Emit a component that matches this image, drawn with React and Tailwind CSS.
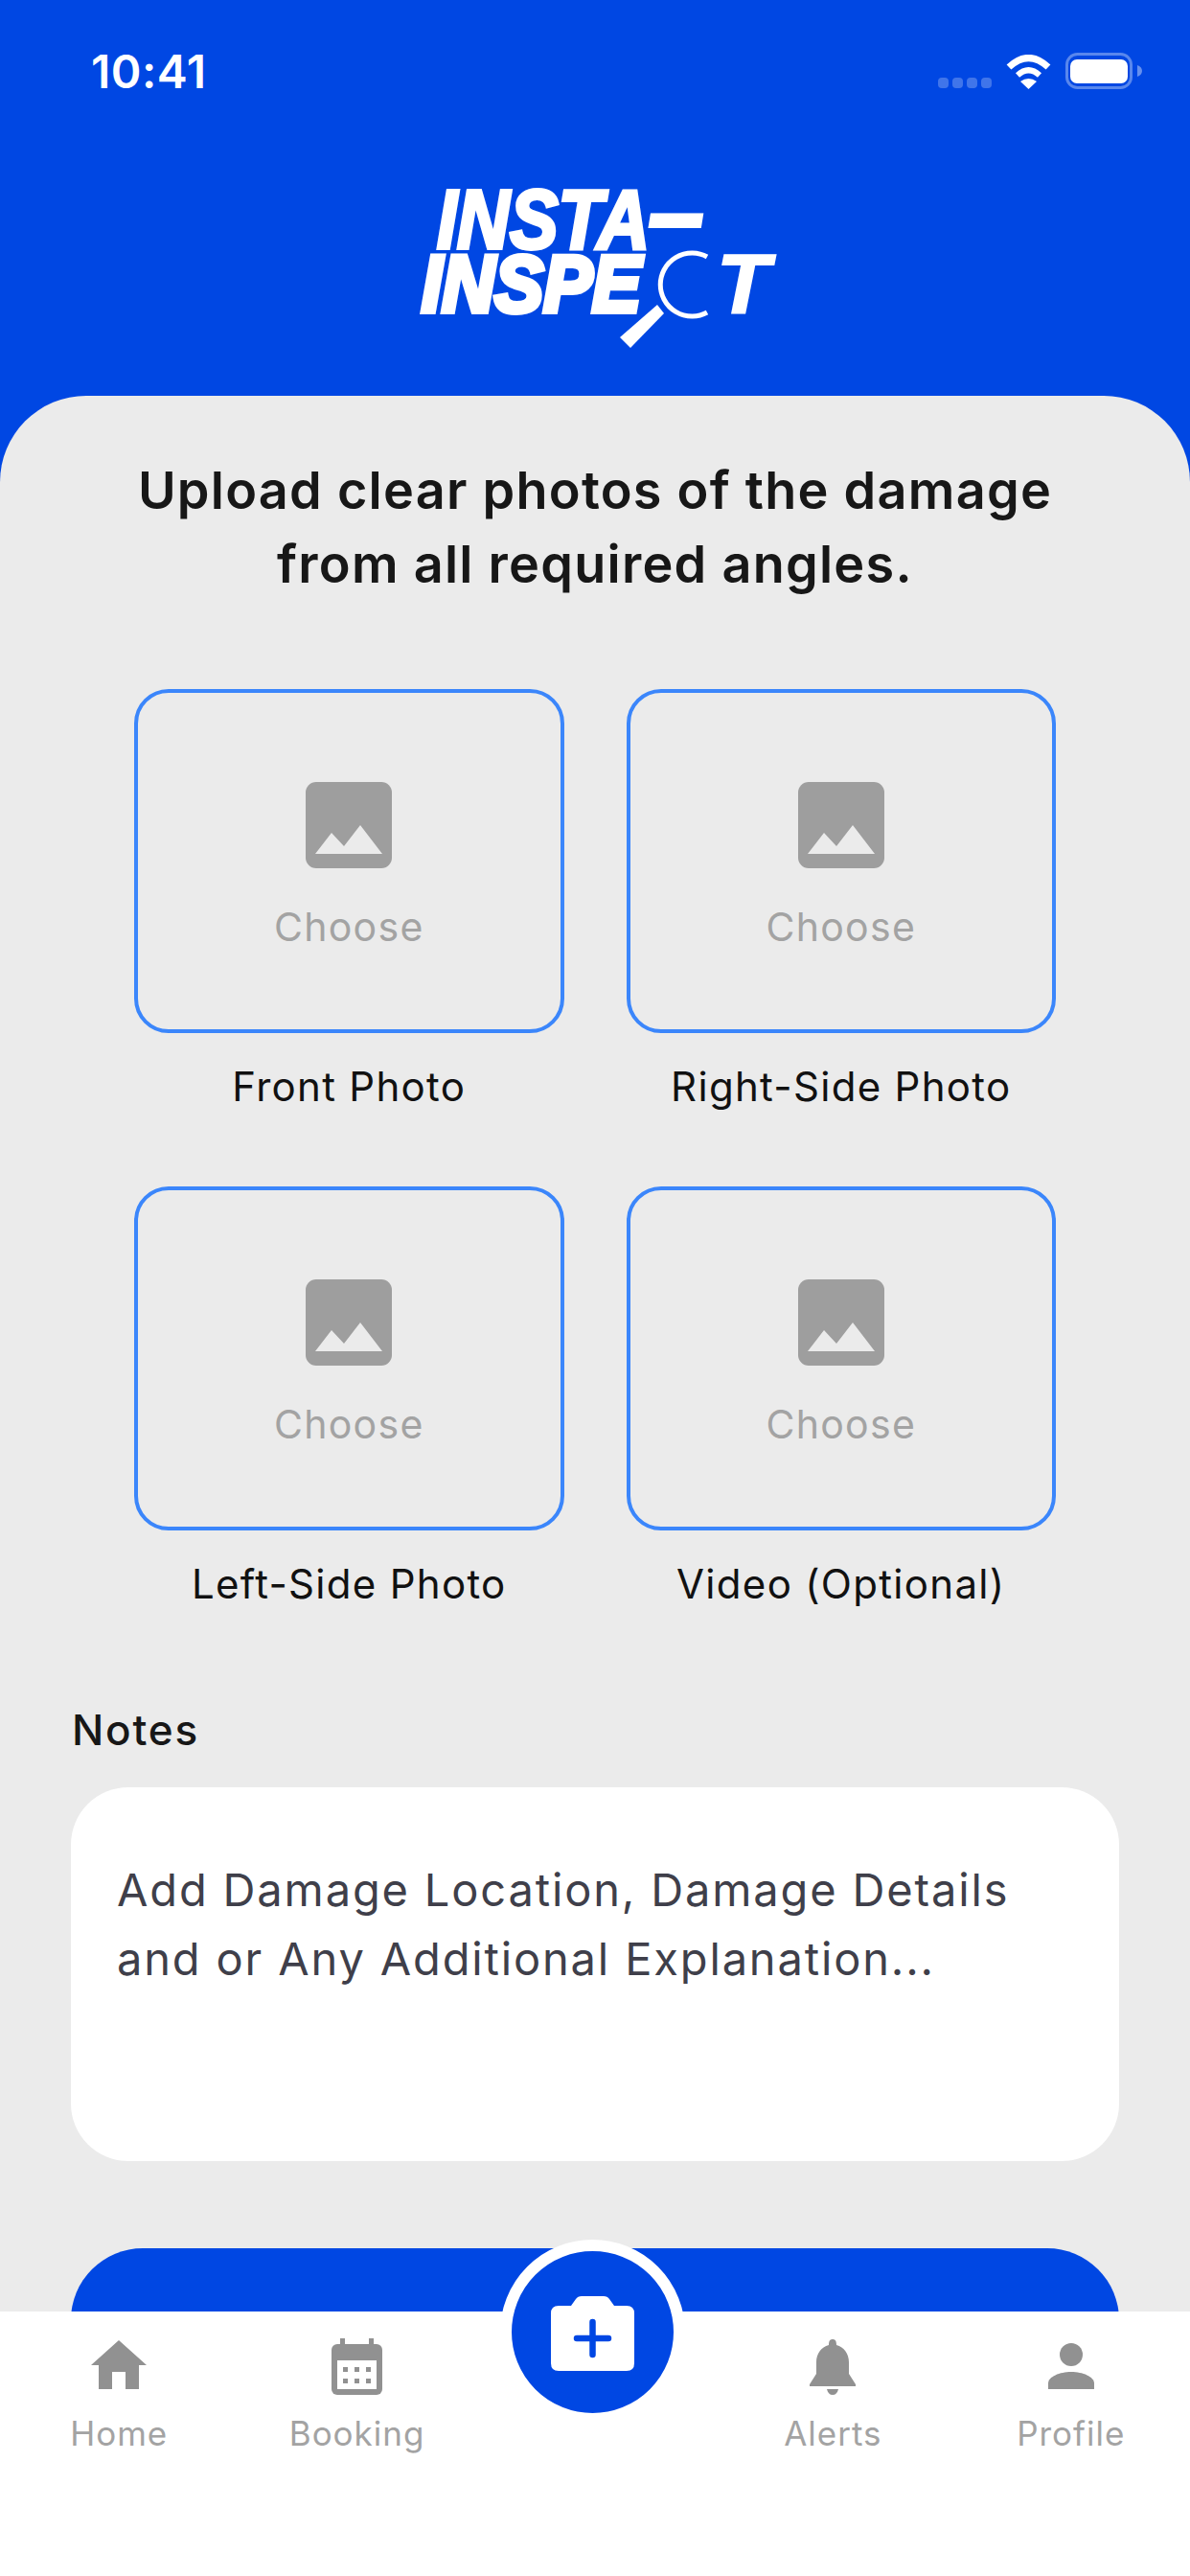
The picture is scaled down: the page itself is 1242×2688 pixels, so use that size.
import React from 'react';

const slots = ['Front Photo', 'Right-Side Photo', 'Left-Side Photo', 'Video (Optional)'];

function Logo() {
  const font = { fontFamily: '"Liberation Sans", sans-serif', fontWeight: 700, fontStyle: 'italic' };
  return (
    <svg width="375" height="175" viewBox="0 0 375 175" className="ml-[435px] mt-[88px] block overflow-visible" fill="white">
      <text x="21" y="68.500" fontSize="87" textLength="222" lengthAdjust="spacingAndGlyphs" stroke="white" strokeWidth="4" style={font}>INSTA</text>
      <text x="243" y="66" fontSize="95" textLength="55" lengthAdjust="spacingAndGlyphs" stroke="white" strokeWidth="6" style={font}>–</text>
      <text x="5" y="134.500" fontSize="84" textLength="229" lengthAdjust="spacingAndGlyphs" stroke="white" strokeWidth="6" style={font}>INSPE</text>
      <text x="313" y="136" fontSize="88" textLength="55" lengthAdjust="spacingAndGlyphs" stroke="white" strokeWidth="2" style={font}>T</text>
      <path d="M303 78A33 33 0 1 0 303 136" fill="none" stroke="white" strokeWidth="5" />
      <polygon points="212,162 223,173 258,137 251,128" />
    </svg>
  );
}

function StatusBar() {
  return (
    <div className="flex items-center justify-between pl-[95px] pr-[50px] pt-[47px] h-[103px] -mb-[1px]">
      <span className="text-[48px] font-semibold leading-[56px] text-white tracking-[0.5px]">10:41</span>
      <div className="flex items-end gap-[15px] -translate-y-[1px]">
        <div className="flex gap-[4px] pb-[1px]">
          <i className="size-[11px] rounded-[4px] bg-white/25" />
          <i className="size-[11px] rounded-[4px] bg-white/25" />
          <i className="size-[11px] rounded-[4px] bg-white/25" />
          <i className="size-[11px] rounded-[4px] bg-white/25" />
        </div>
        <svg width="47" height="36" viewBox="0 0 47 36" fill="white">
          <path d="M3 13Q23.500 -6 44 13" fill="none" stroke="white" strokeWidth="7" />
          <path d="M12 21.500Q23.500 11 35 21.500" fill="none" stroke="white" strokeWidth="6" />
          <path d="M15 28Q23.500 22 32 28L23.500 36Z" />
        </svg>
        <svg width="80" height="38" viewBox="0 0 80 38" fill="white">
          <rect x="1.500" y="1.500" width="67" height="35" rx="11" fill="none" stroke="white" strokeOpacity="0.35" strokeWidth="3" />
          <rect x="5" y="7" width="60" height="25" rx="7" />
          <path d="M75 13C78 14 80 16 80 19C80 22 78 24 75 25Z" fillOpacity="0.4" />
        </svg>
      </div>
    </div>
  );
}

function UploadSlot({ label }) {
  return (
    <div className="flex flex-col">
      <div className="box-border h-[359px] rounded-[36px] border-[4px] border-[#3b86fb] pt-[93px] flex flex-col items-center">
        <svg width="90" height="90" viewBox="0 0 90 90">
          <rect width="90" height="90" rx="11" fill="#9e9e9e" />
          <polygon points="10,75 27,53 40,67 57,45 80,75" fill="#ebebeb" />
        </svg>
        <span className="mt-[36px] text-[41px] leading-[50px] tracking-[1.3px] text-[#a3a3a3]">Choose</span>
      </div>
      <span className="mt-[32px] text-center text-[42px] leading-[48px] tracking-[1.3px] text-[#111]">{label}</span>
    </div>
  );
}

function NavItem({ label, children }) {
  return (
    <div className="flex flex-col items-center">
      <div className="h-[60px] flex items-end justify-center">{children}</div>
      <span className="mt-[18px] text-[35px] leading-[44px] tracking-[1px] text-[#a3a3a3]">{label}</span>
    </div>
  );
}

function BottomNav() {
  return (
    <div className="relative h-[276px] shrink-0 bg-white pt-[27px] grid grid-cols-5 content-start">
      <NavItem label="Home">
        <svg width="58" height="51" viewBox="0 0 58 51" fill="#919191" className="mb-[6px]">
          <path d="M29 0L58 26H50V51H36V33H22V51H8V26H0Z" />
        </svg>
      </NavItem>
      <NavItem label="Booking">
        <svg width="53" height="59" viewBox="0 0 53 59" fill="#919191">
          <rect x="9" width="5" height="8" />
          <rect x="39" width="5" height="8" />
          <rect y="6" width="53" height="53" rx="6" />
          <rect x="6" y="23" width="41" height="30" fill="white" />
          <rect x="12" y="30" width="5" height="5" />
          <rect x="24" y="30" width="5" height="5" />
          <rect x="36" y="30" width="5" height="5" />
          <rect x="12" y="42" width="5" height="5" />
          <rect x="24" y="42" width="5" height="5" />
          <rect x="36" y="42" width="5" height="5" />
        </svg>
      </NavItem>
      <div />
      <NavItem label="Alerts">
        <svg width="48" height="58" viewBox="0 0 48 58" fill="#919191">
          <path d="M24 0C27 0 28 2 28 6C36 8 41 15 41 24V36L48 47V49H0V47L7 36V24C7 15 12 8 20 6C20 2 21 0 24 0Z" />
          <path d="M18 52H30C29 56 27 58 24 58C21 58 19 56 18 52Z" />
        </svg>
      </NavItem>
      <NavItem label="Profile">
        <svg width="48" height="48" viewBox="0 0 48 48" fill="#919191" className="mb-[6px]">
          <circle cx="24" cy="12" r="12" />
          <path d="M0 48V42C0 35 12 30 24 30C36 30 48 35 48 42V48Z" />
        </svg>
      </NavItem>

      {/* center camera button sits over the bar edge */}
      <div className="absolute left-[522px] -top-[75px] box-border size-[193px] rounded-full border-[12px] border-white bg-[#0047e3] flex items-center justify-center">
        <svg width="87" height="78" viewBox="0 0 87 78" className="mt-[3px]">
          <path d="M8 10H21L26 3Q28 0 32 0H55Q59 0 61 3L66 10H79Q87 10 87 18V70Q87 78 79 78H8Q0 78 0 70V18Q0 10 8 10Z" fill="white" />
          <path d="M27 44H60M43.500 27V61" stroke="#0047e3" strokeWidth="6.500" strokeLinecap="round" />
        </svg>
      </div>
    </div>
  );
}

export default function App() {
  return (
    <div className="h-[2688px] w-[1242px] overflow-hidden bg-[#0047e3] flex flex-col font-[Inter,sans-serif]">
      <div className="h-[413px] shrink-0">
        <StatusBar />
        <Logo />
      </div>

      <div className="flex-1 min-h-0 overflow-hidden rounded-t-[90px] bg-[#ebebeb] pt-[60px]">
        <h1 className="text-center text-[54px] font-[560] leading-[77px] tracking-[1.25px] text-[#171717]">
          Upload clear photos of the damage
          <br />
          from all required angles.
        </h1>

        <div className="mt-[92px] mx-[140px] grid grid-cols-2 gap-x-[65px] gap-y-[80px]">
          {slots.map((s) => (
            <UploadSlot key={s} label={s} />
          ))}
        </div>

        <div className="mx-[74px] mt-[104px]">
          <div className="text-[44px] font-medium leading-[48px] tracking-[1.8px] text-[#171717] pl-[1px]">Notes</div>
          <div className="mt-[36px] box-border h-[390px] rounded-[60px] bg-white pl-[48px] pt-[71px] text-[47px] font-[380] leading-[72px] tracking-[1.85px] text-[#3f3f4a]">
            Add Damage Location, Damage Details
            <br />
            and or Any Additional Explanation...
          </div>
          <div className="mt-[91px] h-[150px] rounded-[90px] bg-[#0047e3]" />
        </div>
      </div>

      <BottomNav />
    </div>
  );
}
